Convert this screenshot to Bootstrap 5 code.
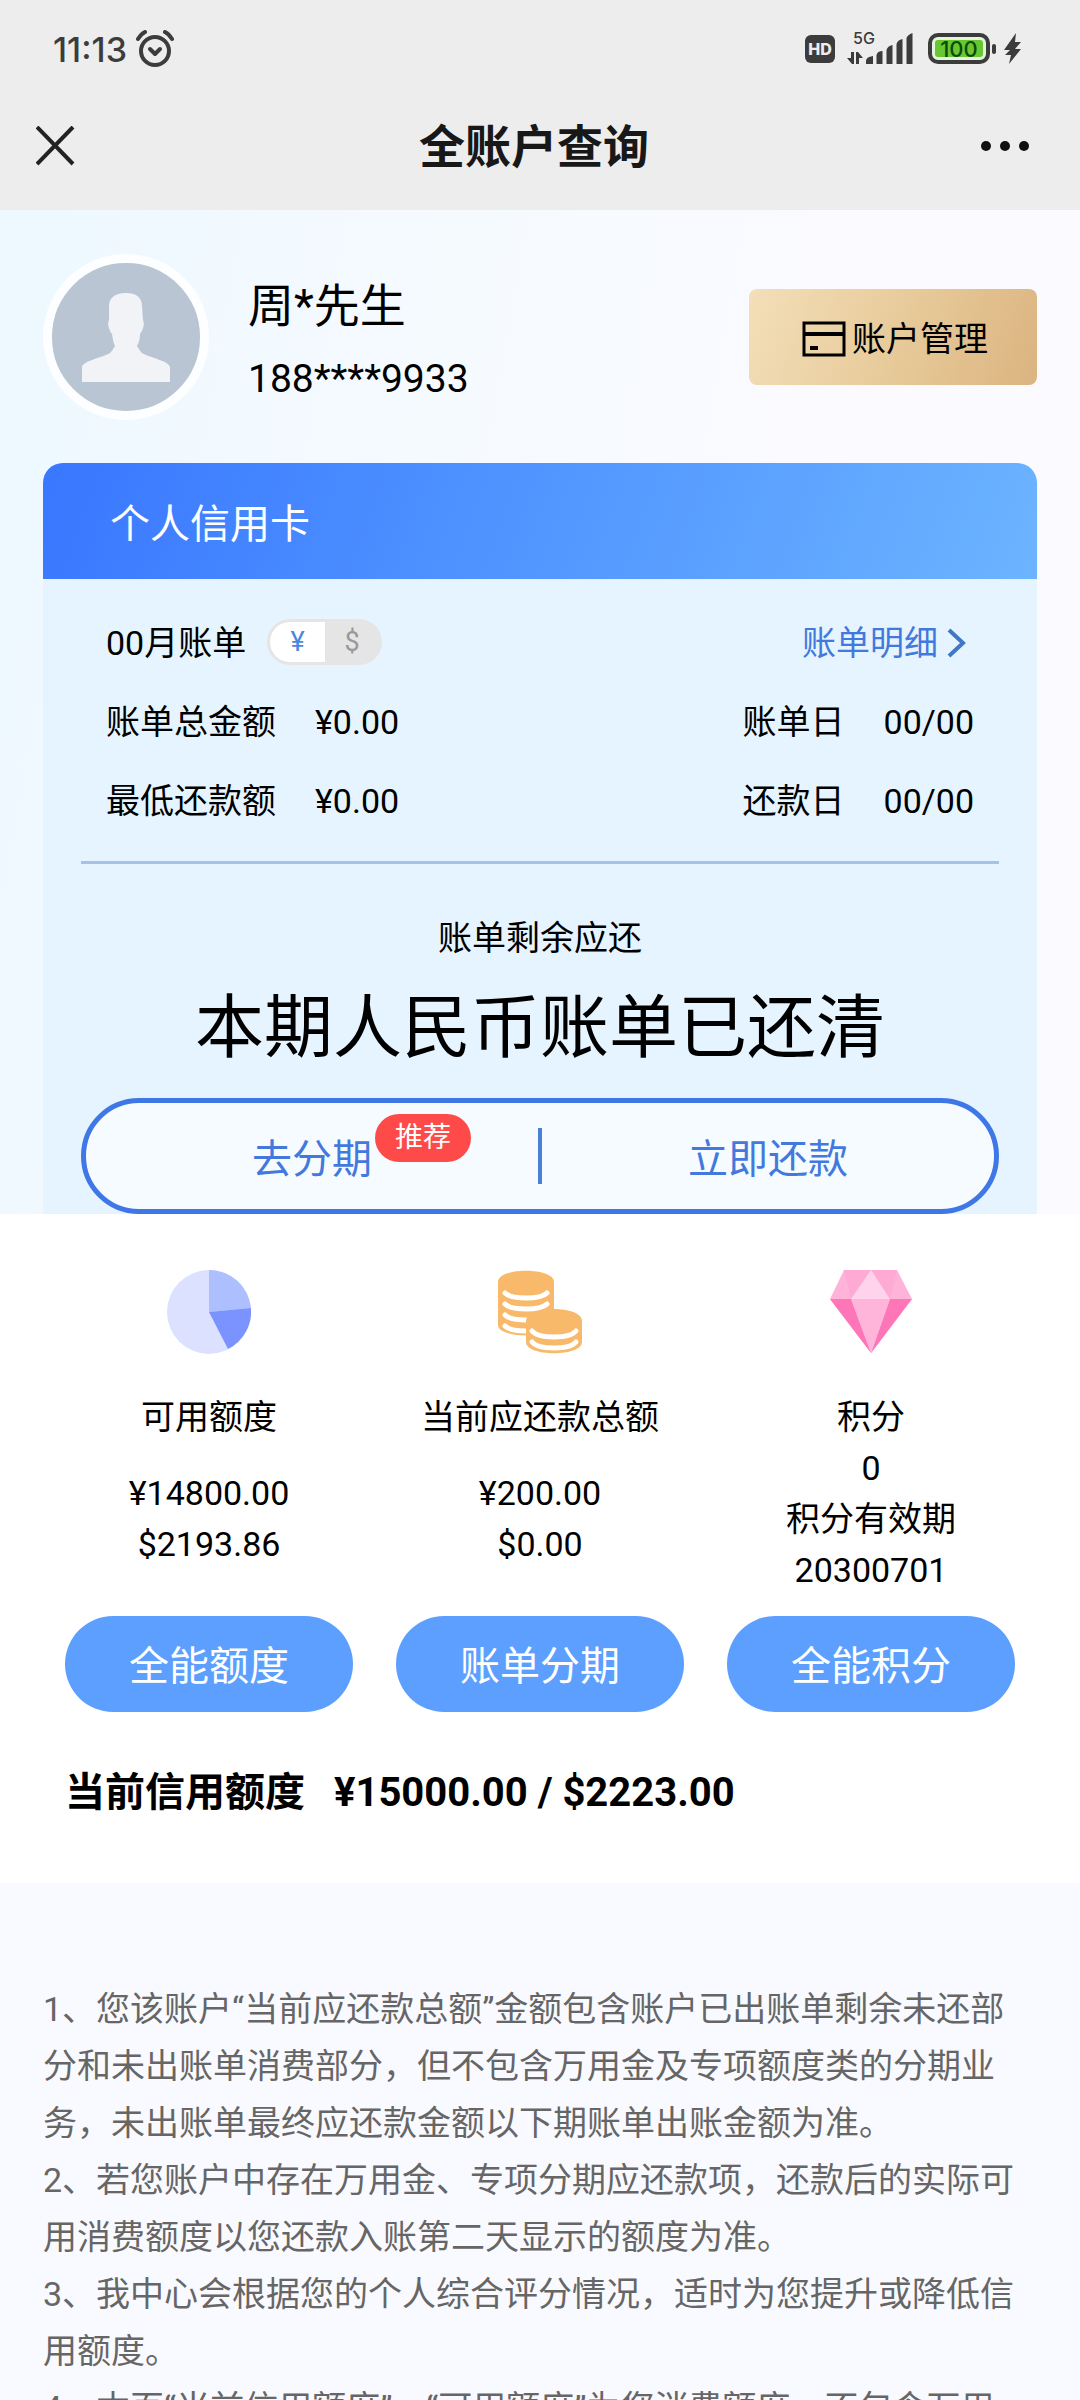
<!DOCTYPE html>
<html lang="zh-CN">
<head>
<meta charset="utf-8">
<meta name="viewport" content="width=device-width, initial-scale=1">
<title>全账户查询</title>
<link href="https://cdn.jsdelivr.net/npm/bootstrap@5.3.0/dist/css/bootstrap.min.css" rel="stylesheet">
<style>
  body {
    font-family: Roboto, "Noto Sans CJK SC", sans-serif;
    font-size: 34px;
    line-height: 51px;
    color: #000;
    background: #f9faff;
  }
  svg { display: block; flex: none; }
  .app { height: 100vh; overflow: hidden; }
  .app-scroll { overflow-y: auto; scrollbar-width: none; }
  .app-scroll::-webkit-scrollbar { display: none; }

  .app-head { background: #ededed; padding-bottom: 16px; }
  .status-row { height: 98px; padding: 0 56px 0 53px; color: #3c3c3c; }
  .clock { font-family: Inter, sans-serif; font-size: 34px; font-weight: 500; }
  .title-row { height: 96px; padding: 0 36px; }
  .title-row h1 { font-size: 46px; font-weight: 700; line-height: 60px; color: #181818; padding-top: 2px; }
  .plain-btn { border: 0; background: none; padding: 0; }

  .hero { padding: 44px 43px 0; background: linear-gradient(100deg, #edf8ff 0%, #f5faff 35%, #fafaff 65%, #fafaff 100%); }
  .avatar { width: 166px; height: 166px; border: 9px solid #fdfeff; background: #b9c5d3; overflow: hidden; }
  .profile-text { margin-left: 39px; padding-top: 10px; }
  .user-name { font-size: 46px; line-height: 74px; }
  .user-phone { font-size: 39px; line-height: 72px; }
  .manage-btn {
    width: 288px; height: 96px; border: 0; border-radius: 8px; color: #000; gap: 6px; padding: 4px 0 0 4px;
    font-size: 34px; background: linear-gradient(110deg, #f3dfb9 0%, #e8cb9b 50%, #dbb480 100%);
  }

  .bill { margin-top: 43px; background: #e6f4ff; border-radius: 20px 20px 0 0; }
  .bill-head {
    height: 116px; padding: 6px 67px 0; border-radius: 20px 20px 0 0; color: #fff; font-size: 40px;
    background: linear-gradient(110deg, #3977ff 0%, #4f93ff 45%, #6cb4ff 100%);
  }
  .bill-body { padding: 25px 38px 0; }
  .bill-row { height: 79px; padding: 0 25px; }
  .bill-row dl { gap: 39px; }
  .bill-row dt { font-weight: 400; }
  .blue-link { color: #4379dd; text-decoration: none; }
  .currency { width: 115px; height: 46px; border: 3px solid #e5e5e5; border-radius: 23px; background: #e5e5e5; margin: 0 0 4px 21px; overflow: hidden; }
  .currency label { font-size: 27px; line-height: 40px; color: #999; text-align: center; cursor: pointer; }
  .currency .btn-check:checked + label { background: #fff; color: #4a88dc; }
  .bill-line { height: 3px; margin-top: 20px; background: #a6c2e8; }
  .bill-hint { margin-top: 49px; line-height: 50px; }
  .bill-state { margin-top: 16px; font-size: 69px; line-height: 100px; font-weight: 400; }
  .pay-pill { height: 116px; margin: 19px 0 -3px; border: 5px solid #3f78e6; border-radius: 58px; background: #f6fbff; font-size: 40px; }
  .pay-pill .plain-btn { padding-top: 6px; }
  .pay-split { width: 4px; height: 56px; background: #4a80dc; }
  .tip-badge {
    top: -22px; left: 100%; margin-left: 3px; padding: 0 20px; border-radius: 24px;
    background: #ff4a4a; color: #fff; font-size: 28px; line-height: 48px;
  }

  .stats { padding: 59px 65px 60px; background: #fff; }
  .stat-cols { gap: 43px; }
  .stat-cols svg { margin-bottom: 38px; }
  .stat-cols .amounts { margin-top: 25px; }
  .stat-btn { height: 96px; border: 0; border-radius: 48px; padding: 5px 0 0; background: #5c9fff; color: #fff; font-size: 40px; }
  .btn-gap { margin-top: 20px; }
  .limit { margin-top: 51px; gap: 29px; font-size: 40px; line-height: 60px; font-weight: 700; }

  .notes { padding: 98px 60px 60px 43px; color: #666; line-height: 57px; background: #f9faff; }
</style>
</head>
<body>
<div class="app d-flex flex-column">
  <header class="app-head flex-shrink-0">
    <div class="status-row d-flex align-items-center justify-content-between">
      <div class="d-flex align-items-center gap-2">
        <span class="clock">11:13</span>
        <svg width="40" height="38" viewBox="0 0 40 38" fill="none" stroke="#3c3c3c" stroke-linecap="round" stroke-linejoin="round">
          <circle cx="20" cy="21" r="14" stroke-width="4"/>
          <path d="M15 19l5 5 5-5" stroke-width="4"/>
          <path d="M3 9q3-5 7-7M37 9q-3-5-7-7" stroke-width="4"/>
        </svg>
      </div>
      <svg width="219" height="52" viewBox="0 -8 219 52" fill="#3c3c3c">
        <rect x="0" y="4" width="30" height="28" rx="6"/>
        <text x="15" y="24" font-family="Inter, sans-serif" font-size="16" font-weight="800" text-anchor="middle" fill="#ededed">HD</text>
        <text x="59" y="13" font-family="Inter, sans-serif" font-size="16" font-weight="500" text-anchor="middle">5G</text>
        <path d="M46 21h3v12h-2l-5-6h4zM51 33V21h2l5 6h-4v6z"/>
        <path d="M61 33v-3q0-4 7-5v8zM71.500 33v-9q1-4 6-4v13zM81.500 33V19q1-4 6-5v19zM91.500 33V13q1-4 6-5v25zM101.500 33V7q1-3 6-5v31z"/>
        <rect x="125" y="4" width="58" height="27" rx="8" fill="#e4f5dc" stroke="#3c3c3c" stroke-width="4"/>
        <rect x="130" y="9" width="48" height="17" rx="3" fill="#69c832"/>
        <rect x="187" y="13" width="4" height="10" rx="2"/>
        <text x="154" y="26" font-family="Inter, sans-serif" font-size="22" font-weight="500" text-anchor="middle" fill="#0d4a0b">100</text>
        <path d="M211 2l-12 17h6l-5 5h6l-2 9 12-15h-6l6-7h-6z"/>
      </svg>
    </div>
    <div class="title-row d-flex align-items-center justify-content-between">
      <button type="button" class="plain-btn" aria-label="关闭">
        <svg width="52" height="40" viewBox="0 0 52 40" stroke="#222" stroke-width="4"><path d="M1 1l36 37M37 1L1 38"/></svg>
      </button>
      <h1 class="m-0">全账户查询</h1>
      <button type="button" class="plain-btn" aria-label="更多">
        <svg width="64" height="12" viewBox="0 0 64 12" fill="#111"><circle cx="6" cy="6" r="5"/><circle cx="25" cy="6" r="5"/><circle cx="44" cy="6" r="5"/></svg>
      </button>
    </div>
  </header>

  <main class="app-scroll flex-grow-1">
    <section class="hero position-relative z-1">
      <div class="d-flex align-items-center">
        <div class="avatar rounded-circle flex-shrink-0">
          <svg width="148" height="148" viewBox="0 0 148 148" fill="#f1f3f6">
            <path d="M57 43C57 34 64 30 74 30S90 34 90 43L91 57C93 61 91 67 88 71C88 76 87 79 85 83C87 86 88 88 90 90C99 95 117 98 118 104V119H30V104C31 98 49 95 58 90C60 88 61 86 63 83C61 79 61 76 60 71C57 67 55 61 57 57Z"/>
          </svg>
        </div>
        <div class="profile-text flex-grow-1">
          <div class="user-name">周*先生</div>
          <div class="user-phone">188****9933</div>
        </div>
        <button type="button" class="manage-btn d-flex align-items-center justify-content-center flex-shrink-0">
          <svg width="44" height="36" viewBox="0 0 44 36" fill="none" stroke="#000" stroke-width="3"><rect x="2" y="2" width="40" height="32"/><path d="M2 13h40" stroke-width="4"/><path d="M8 27h8" stroke-width="4"/></svg>
          <span>账户管理</span>
        </button>
      </div>

      <div class="bill">
        <div class="bill-head d-flex align-items-center">个人信用卡</div>
        <div class="bill-body">
          <div class="bill-row d-flex align-items-center">
            <span>00月账单</span>
            <div class="currency d-flex" role="group" aria-label="币种">
              <input type="radio" class="btn-check" name="currency" id="cny" checked>
              <label for="cny" class="w-50">¥</label>
              <input type="radio" class="btn-check" name="currency" id="usd">
              <label for="usd" class="w-50">$</label>
            </div>
            <a href="#" class="blue-link ms-auto d-flex align-items-center gap-2">账单明细
              <svg width="28" height="32" viewBox="0 0 28 32" fill="none" stroke="#3f78c4" stroke-width="4"><path d="M3 2l14 13L3 28"/></svg>
            </a>
          </div>
          <div class="bill-row d-flex align-items-center justify-content-between">
            <dl class="d-flex m-0"><dt>账单总金额</dt><dd class="m-0">¥0.00</dd></dl>
            <dl class="d-flex m-0"><dt>账单日</dt><dd class="m-0">00/00</dd></dl>
          </div>
          <div class="bill-row d-flex align-items-center justify-content-between">
            <dl class="d-flex m-0"><dt>最低还款额</dt><dd class="m-0">¥0.00</dd></dl>
            <dl class="d-flex m-0"><dt>还款日</dt><dd class="m-0">00/00</dd></dl>
          </div>
          <div class="bill-line"></div>
          <p class="bill-hint mb-0 text-center">账单剩余应还</p>
          <h2 class="bill-state mb-0 text-center">本期人民币账单已还清</h2>
          <div class="pay-pill d-flex align-items-center">
            <button type="button" class="plain-btn blue-link flex-fill w-50">
              <span class="position-relative">去分期<span class="tip-badge position-absolute text-nowrap">推荐</span></span>
            </button>
            <span class="pay-split flex-shrink-0"></span>
            <button type="button" class="plain-btn blue-link flex-fill w-50">立即还款</button>
          </div>
        </div>
      </div>
    </section>

    <section class="stats">
      <div class="stat-cols d-flex text-center">
        <div class="w-100 d-flex flex-column align-items-center">
          <svg width="84" height="84" viewBox="0 0 84 84">
            <circle cx="42" cy="42" r="42" fill="#dce1ff"/>
            <path d="M42 42V0A42 42 0 0 1 84 38z" fill="#aebfff"/>
            <path d="M42 42l42-4A42 42 0 0 1 61 79z" fill="#7b93ff"/>
          </svg>
          <div>可用额度</div>
          <div class="amounts">¥14800.00<br>$2193.86</div>
          <div class="btn-gap mt-auto w-100"><button type="button" class="stat-btn w-100">全能额度</button></div>
        </div>
        <div class="w-100 d-flex flex-column align-items-center">
          <svg width="84" height="84" viewBox="0 0 84 84" fill="none" stroke="#fff" stroke-width="5" stroke-linecap="round">
            <path d="M0 12C0-3 56-3 56 12v43c0 14-56 14-56 0z" fill="#f8ba6a" stroke="none"/>
            <path d="M7 23q5 5 21 5t21-5M7 34q5 5 21 5t21-5M7 45q5 5 21 5t21-5M7 56q5 5 21 5t21-5"/>
            <path d="M28 51c0-16 56-16 56 0v21c0 15-56 15-56 0z" fill="#f8ba6a" stroke="none"/>
            <path d="M34 61q5 6 22 6t22-6M34 72q5 6 22 6t22-6"/>
          </svg>
          <div>当前应还款总额</div>
          <div class="amounts">¥200.00<br>$0.00</div>
          <div class="btn-gap mt-auto w-100"><button type="button" class="stat-btn w-100">账单分期</button></div>
        </div>
        <div class="w-100 d-flex flex-column align-items-center">
          <svg width="84" height="84" viewBox="0 0 84 84">
            <path d="M15 0h53l15 29-41 54L1 29z" fill="#ffb3d9"/>
            <path d="M15 0h27L22 29zM68 0H42l19 29z" fill="#ffaad4"/>
            <path d="M42 0L22 29h39z" fill="#ffd3ec"/>
            <path d="M1 29h21l20 54zM83 29H61L42 83z" fill="#ff76b8"/>
            <path d="M22 29h39L42 83z" fill="#ffb5da"/>
          </svg>
          <div>积分<br>0<br>积分有效期<br>20300701</div>
          <div class="btn-gap w-100"><button type="button" class="stat-btn w-100">全能积分</button></div>
        </div>
      </div>
      <div class="limit d-flex"><span>当前信用额度</span><span>¥15000.00 / $2223.00</span></div>
    </section>

    <section class="notes">
      <p class="m-0">1、您该账户“当前应还款总额”金额包含账户已出账单剩余未还部分和未出账单消费部分，但不包含万用金及专项额度类的分期业务，未出账单最终应还款金额以下期账单出账金额为准。</p>
      <p class="m-0">2、若您账户中存在万用金、专项分期应还款项，还款后的实际可用消费额度以您还款入账第二天显示的额度为准。</p>
      <p class="m-0">3、我中心会根据您的个人综合评分情况，适时为您提升或降低信用额度。</p>
      <p class="m-0">4、本页“当前信用额度”、“可用额度”为您消费额度，不包含万用金额度。</p>
    </section>
  </main>
</div>
<script src="https://cdn.jsdelivr.net/npm/bootstrap@5.3.0/dist/js/bootstrap.bundle.min.js"></script>
</body>
</html>
